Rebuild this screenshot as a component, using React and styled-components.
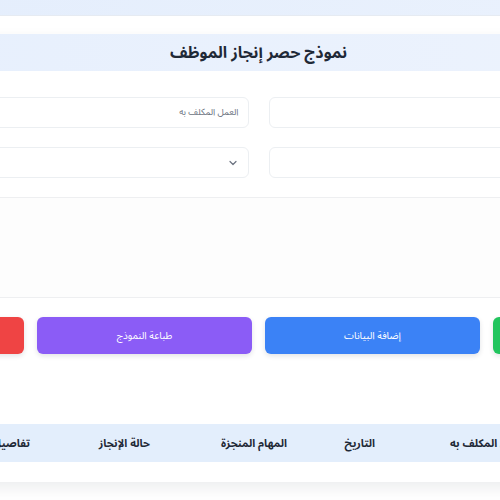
import React from "react";
import styled, { createGlobalStyle } from "styled-components";

const GlobalStyle = createGlobalStyle`
  html, body {
    margin: 0;
    padding: 0;
    background: #ffffff;
    overflow: hidden;
  }
  body {
    font-family: "Noto Sans Arabic", "DejaVu Sans Condensed", "DejaVu Sans", sans-serif;
    color: #1f2937;
  }
`;

const Viewport = styled.div`
  width: 100%;
  height: 500px;
  overflow: hidden;
`;

const Page = styled.div`
  width: 959px;
  margin-left: -221px;
  direction: rtl;
`;

const TopBar = styled.header`
  height: 15px;
  background: linear-gradient(90deg, #e3edfc, #ebf2fd);
  border-bottom: 1px solid #e6ebf2;
`;

const Card = styled.main`
  margin: 18px 0 0;
  background: #ffffff;
  box-shadow: 0 6px 14px rgba(15, 23, 42, 0.08);
  padding-bottom: 20px;
`;

const TitleBar = styled.div`
  height: 37px;
  display: flex;
  align-items: center;
  justify-content: center;
  background: linear-gradient(90deg, #e6effd, #edf3fd);

  h1 {
    margin: 0;
    font-size: 16px;
    font-weight: 700;
    color: #1f2937;
  }
`;

const Form = styled.div`
  display: grid;
  grid-template-columns: 1fr 1fr;
  gap: 19px 20px;
  padding: 26px 30px 0;
`;

const Input = styled.input`
  display: block;
  box-sizing: border-box;
  height: 31px;
  width: 100%;
  padding: 0 9px;
  border: 1px solid #eceff2;
  border-radius: 6px;
  background: #ffffff;
  font-family: inherit;
  font-size: 9px;
  color: #374151;
  outline: none;

  &::placeholder {
    color: #6b7280;
  }
`;

const SelectWrap = styled.div`
  position: relative;
  height: 31px;
`;

const Select = styled.select`
  display: block;
  box-sizing: border-box;
  appearance: none;
  height: 31px;
  width: 100%;
  padding: 0 30px 0 9px;
  border: 1px solid #eceff2;
  border-radius: 6px;
  background: #ffffff;
  font-family: inherit;
  font-size: 9px;
  color: #374151;
  outline: none;
`;

const Chevron = styled.svg`
  position: absolute;
  right: 11px;
  top: 11px;
  width: 10px;
  height: 10px;
  pointer-events: none;
`;

const TextArea = styled.textarea`
  display: block;
  grid-column: 1 / -1;
  box-sizing: border-box;
  height: 101px;
  resize: none;
  border: 1px solid #eeeff1;
  border-radius: 6px;
  background: #fdfdfd;
  outline: none;
`;

const Buttons = styled.div`
  display: grid;
  grid-template-columns: repeat(4, 1fr);
  gap: 13px;
  padding: 19px 30px 0;
`;

const Button = styled.button`
  height: 37px;
  border: none;
  border-radius: 6px;
  background: ${(p) => p.$bg};
  color: #ffffff;
  font-family: inherit;
  font-size: 10px;
  box-shadow: 0 2px 5px rgba(15, 23, 42, 0.12);
  cursor: pointer;
`;

const TableWrap = styled.div`
  padding: 70px 30px 0;
`;

const Table = styled.table`
  width: 100%;
  border-collapse: collapse;
  table-layout: fixed;

  th {
    height: 38px;
    padding: 0 12px;
    background: #e3eefc;
    text-align: right;
    font-size: 11px;
    font-weight: 700;
    color: #1f2937;
    white-space: nowrap;
  }
`;

const columns = [
  { label: "اسم الموظف", width: 168 },
  { label: "العمل المكلف به", width: 153 },
  { label: "التاريخ", width: 88 },
  { label: "المهام المنجزة", width: 137 },
  { label: "حالة الإنجاز", width: 120 },
  { label: "تفاصيل", width: 120 },
  { label: "إجراءات", width: 113 },
];

const buttons = [
  { label: "حفظ البيانات", bg: "#22c55e" },
  { label: "إضافة البيانات", bg: "#3b82f6" },
  { label: "طباعة النموذج", bg: "#8b5cf6" },
  { label: "مسح الحقول", bg: "#ef4444" },
];

export default function App() {
  return (
    <Viewport>
      <GlobalStyle />
      <Page>
        <TopBar />
        <Card>
          <TitleBar>
            <h1>نموذج حصر إنجاز الموظف</h1>
          </TitleBar>
          <Form>
            <Input placeholder="اسم الموظف" />
            <Input placeholder="العمل المكلف به" />
            <Input type="text" placeholder="" />
            <SelectWrap>
              <Select defaultValue="">
                <option value=""></option>
                <option value="done">مكتمل</option>
                <option value="progress">قيد التنفيذ</option>
              </Select>
              <Chevron viewBox="0 0 10 10" fill="none" stroke="#6b7280" strokeWidth="1.2">
                <path d="M2 3.5l3 3 3-3" strokeLinecap="round" strokeLinejoin="round" />
              </Chevron>
            </SelectWrap>
            <TextArea />
          </Form>
          <Buttons>
            {buttons.map((b) => (
              <Button key={b.label} $bg={b.bg}>
                {b.label}
              </Button>
            ))}
          </Buttons>
          <TableWrap>
            <Table>
              <colgroup>
                {columns.map((c) => (
                  <col key={c.label} style={{ width: c.width }} />
                ))}
              </colgroup>
              <thead>
                <tr>
                  {columns.map((c) => (
                    <th key={c.label}>{c.label}</th>
                  ))}
                </tr>
              </thead>
            </Table>
          </TableWrap>
        </Card>
      </Page>
    </Viewport>
  );
}
